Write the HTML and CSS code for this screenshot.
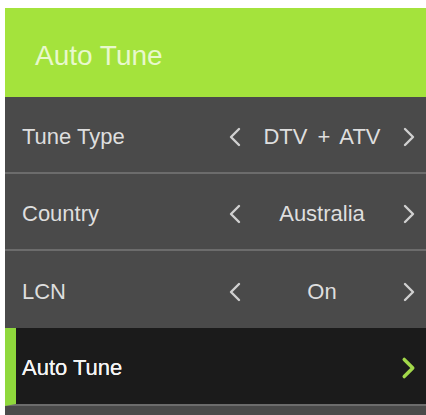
FILE: index.html
```html
<!DOCTYPE html>
<html>
<head>
<meta charset="utf-8">
<link rel="stylesheet" href="styles.css">
</head>
<body>
<div class="menu">
  <div class="header">Auto Tune</div>
  <div class="row sep">
    <span class="label">Tune Type</span>
    <div class="opt">
      <svg class="arr" viewBox="0 0 14 20"><polyline points="11,2 3,10 11,18"/></svg>
      <span class="val">DTV + ATV</span>
      <svg class="arr" viewBox="0 0 14 20"><polyline points="3,2 11,10 3,18"/></svg>
    </div>
  </div>
  <div class="row sep">
    <span class="label">Country</span>
    <div class="opt">
      <svg class="arr" viewBox="0 0 14 20"><polyline points="11,2 3,10 11,18"/></svg>
      <span class="val">Australia</span>
      <svg class="arr" viewBox="0 0 14 20"><polyline points="3,2 11,10 3,18"/></svg>
    </div>
  </div>
  <div class="row tall">
    <span class="label">LCN</span>
    <div class="opt">
      <svg class="arr" viewBox="0 0 14 20"><polyline points="11,2 3,10 11,18"/></svg>
      <span class="val">On</span>
      <svg class="arr" viewBox="0 0 14 20"><polyline points="3,2 11,10 3,18"/></svg>
    </div>
  </div>
  <div class="row selected">
    <span class="label">Auto Tune</span>
    <svg class="arr go" viewBox="0 0 14 20"><polyline points="3,2 11,10 3,18"/></svg>
  </div>
  <div class="rest"></div>
</div>
</body>
</html>
```
FILE: styles.css
```css
html, body {
  margin: 0;
  padding: 0;
  background: #ffffff;
}
body {
  font-family: "Liberation Sans", Arial, sans-serif;
  padding: 8px 0 0 5px;
  height: 415px;
  box-sizing: border-box;
  overflow: hidden;
}
.menu {
  background: #4a4a4a;
  display: flex;
  flex-direction: column;
  height: 407px;
}
.header {
  background: #a4e33c;
  color: #e8f8cc;
  font-size: 28px;
  height: 89px;
  box-sizing: border-box;
  padding: 7px 0 0 30px;
  display: flex;
  align-items: center;
}
.row {
  height: 75px;
  display: flex;
  align-items: center;
  padding: 4px 10px 0 17px;
  box-sizing: border-box;
  color: #dedede;
  font-size: 22px;
}
.row.sep {
  height: 77px;
  border-bottom: 2px solid #6c6c6c;
}
.row.tall {
  height: 77px;
}
.label {
  flex: 1;
}
.opt {
  display: flex;
  align-items: center;
  width: 188px;
}
.val {
  flex: 1;
  text-align: center;
  word-spacing: 4px;
}
.arr {
  width: 14px;
  height: 20px;
  fill: none;
  stroke: #d0d0d0;
  stroke-width: 2.4;
  stroke-linecap: round;
  stroke-linejoin: round;
}
.row.selected {
  background: #1b1b1b;
  color: #f4f4f4;
  border-left: 11px solid #8fd83c;
  padding-left: 6px;
  border-bottom: 2px solid #6c6c6c;
  height: 78px;
  text-shadow: 0 0 0.6px #f4f4f4;
}
.arr.go {
  stroke: #a2d84a;
  stroke-width: 3.2;
  width: 15px;
  height: 22px;
}
.rest {
  flex: 1;
}
```
